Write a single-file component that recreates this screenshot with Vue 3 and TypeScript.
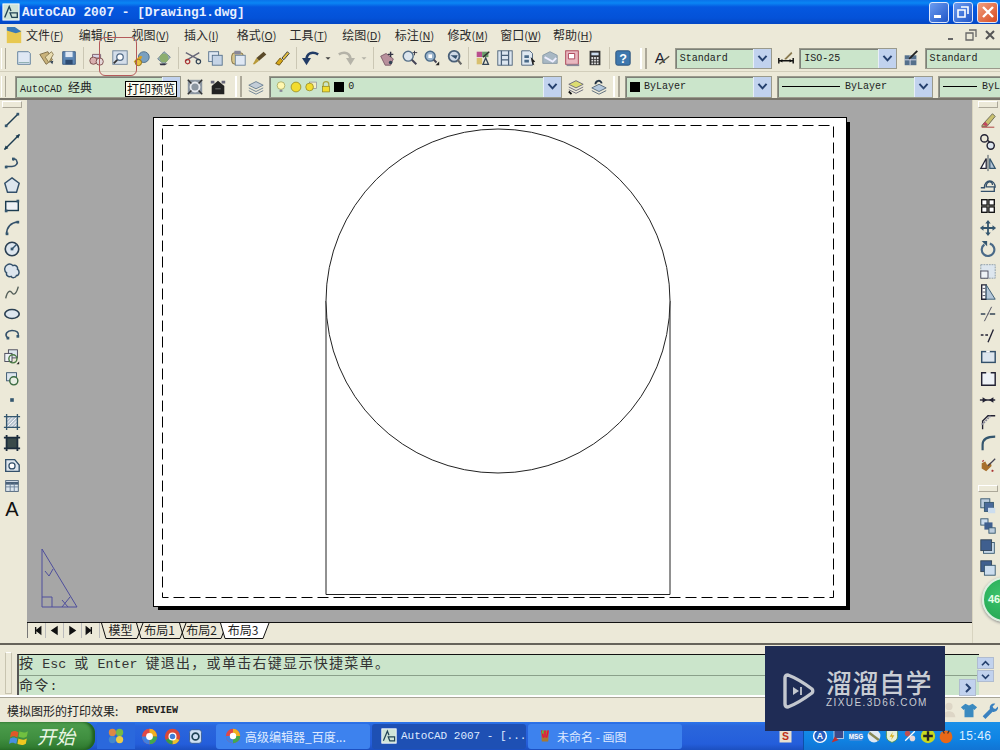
<script setup lang="ts">
const ico: Record<string, string> = {
  newf: '<path d="M3 3h12l2 2v12H3z" fill="#dfe8f4" stroke="#5a7a9a"/><path d="M4 15h12" stroke="#8aa"/>',
  open: '<path d="M2 6l9-3 5 9-7 5z" fill="#c9b27a" stroke="#7a6a44"/><path d="M8 9l7-6 2 3-5 9z" fill="#e8dcb0" stroke="#8a7a50"/><path d="M13 14l3 3 1-4z" fill="#345"/>',
  save: '<path d="M3 3h14v14H3z" fill="#5c86b4" stroke="#3a5a80"/><path d="M6 3h8v6H6z" fill="#dfe8f4"/><path d="M6 12h8v5H6z" fill="#2d4a70"/>',
  plot: '<path d="M5 6h9v4H5z" fill="#d8d4e4" stroke="#7a5a6a"/><circle cx="6" cy="13" r="4" fill="#d9b0b0" stroke="#7a4a4a"/><circle cx="13" cy="14" r="4" fill="#e4d8d8" stroke="#7a4a4a"/>',
  prev: '<rect x="2" y="2" width="16" height="15" fill="#d4deea" stroke="#6a8098"/><circle cx="10" cy="9" r="3.6" fill="#fff" stroke="#516a86" stroke-width="1.4"/><path d="M7 12l-4 4" stroke="#333" stroke-width="2"/>',
  publish: '<circle cx="12" cy="9" r="6" fill="#7aa0c0" stroke="#4a6a88"/><path d="M2 15c3-5 6-3 7-7" stroke="#d9a020" stroke-width="3" fill="none"/><circle cx="6" cy="15" r="3.5" fill="#e8c040" stroke="#8a6a10"/>',
  dwf: '<path d="M3 11l7-8 7 6-7 8z" fill="#9ab0c4" stroke="#6a8090"/><circle cx="10" cy="10" r="5" fill="#8cae6e"/><path d="M5 16h9l-3 2H6z" fill="#334"/>',
  cut: '<path d="M2 4l15 8M2 13L17 4" stroke="#667" stroke-width="1.5"/><circle cx="4" cy="14" r="2.4" fill="none" stroke="#a33" stroke-width="1.4"/><circle cx="16" cy="14" r="2.4" fill="none" stroke="#345" stroke-width="1.4"/>',
  copy: '<rect x="3" y="3" width="11" height="11" fill="#e0e8f2" stroke="#55708c"/><rect x="7" y="7" width="11" height="11" fill="#c5d4e6" stroke="#55708c"/>',
  paste: '<rect x="3" y="4" width="13" height="13" rx="4" fill="#d8c68c" stroke="#7a6a40"/><rect x="6" y="2" width="7" height="4" fill="#889"/><rect x="7" y="7" width="11" height="11" fill="#dfe8f4" stroke="#6b8299"/>',
  brush: '<path d="M14 3l3 3-8 7-3-3z" fill="#5a4a2a"/><path d="M6 10l3 3-5 4-2 0z" fill="#b89a3a"/>',
  match: '<path d="M3 16l5-6 3 3-4 5z" fill="#d8a818" stroke="#6a5010"/><path d="M10 10l6-7 2 2-6 7z" fill="#e4c040" stroke="#333"/>',
  undo: '<path d="M18 6C11 2 5 5 5 12" stroke="#223c66" stroke-width="3" fill="none"/><path d="M0 10h10l-5 8z" fill="#223c66"/>',
  redo: '<path d="M2 6c7-4 13-1 13 6" stroke="#b5b3a8" stroke-width="3" fill="none"/><path d="M10 10h10l-5 8z" fill="#b5b3a8"/>',
  dd: '<path d="M7 9h6l-3 3z" fill="#444"/>',
  dd2: '<path d="M7 9h6l-3 3z" fill="#b5b3a8"/>',
  pan: '<path d="M3 8l6-3 8 6-3 7H8z" fill="#b8909c" stroke="#7a5a68"/><path d="M14 3v6M11 6h6" stroke="#334" stroke-width="1.6"/><circle cx="14" cy="15" r="2" fill="#345"/>',
  zoomr: '<circle cx="8" cy="8" r="5.5" fill="#dde6ee" stroke="#556f88" stroke-width="1.6"/><path d="M12 12l5 5" stroke="#445" stroke-width="2.2"/><path d="M15 2v5M13 4h5" stroke="#334"/>',
  zoomw: '<circle cx="8" cy="8" r="5.5" fill="#9ab4cc" stroke="#4a6a88" stroke-width="1.6"/><rect x="6" y="6" width="4" height="4" fill="#fff"/><path d="M12 12l3 3" stroke="#445" stroke-width="2.2"/><path d="M14 18l4-4v4z" fill="#222"/>',
  zoomp: '<circle cx="9" cy="8" r="6" fill="#cfd9e6" stroke="#4a6078" stroke-width="2"/><path d="M5 7h8l-2 4z" fill="#34506e"/><path d="M13 12l4 5" stroke="#666" stroke-width="2.4"/>',
  props: '<rect x="3" y="3" width="6" height="6" fill="#b94f8e"/><rect x="9" y="3" width="7" height="6" fill="#6a9a6a"/><path d="M3 10h6v7H3z" fill="#d8c070"/><path d="M10 17l3-7 3 7z" fill="none" stroke="#345" stroke-width="1.5"/><path d="M10 9l7-6" stroke="#333" stroke-width="1.6"/>',
  design: '<rect x="2" y="2" width="16" height="16" fill="#dce6f0" stroke="#4a6078"/><path d="M6 2v16M14 2v16M6 7h8M6 12h8" stroke="#4a6078" stroke-width="1.4"/>',
  tool: '<path d="M3 2h9l3 3v13H3z" fill="#dfe8f0" stroke="#4a6078"/><path d="M6 7h5v3H6zM6 12h5v3H6z" fill="#4a6a88"/><path d="M13 9l5 5-2 1 1 3-2-1-1-3z" fill="#222"/>',
  sheet: '<path d="M2 7l8-4 8 4v9H2z" fill="#a8b8c4" stroke="#8899a6"/><path d="M4 9l9 5 4-4" stroke="#eef" stroke-width="2" fill="none"/>',
  markup: '<rect x="3" y="2" width="14" height="15" fill="#e8b8c0" stroke="#a83c50"/><path d="M6 5h7v6H6z" fill="#fff" stroke="#a83c50"/><path d="M4 18h14" stroke="#889" stroke-width="2"/>',
  calc: '<rect x="4" y="2" width="12" height="16" fill="#333"/><rect x="6" y="4" width="8" height="3" fill="#cde"/><path d="M6 9h2v2H6zM9 9h2v2H9zM12 9h2v2h-2zM6 12h2v2H6zM9 12h2v2H9zM12 12h2v2h-2zM6 15h2v2H6zM9 15h2v2H9zM12 15h2v2h-2z" fill="#ddd"/>',
  help: '<rect x="2" y="2" width="16" height="16" rx="2" fill="#3f78ae" stroke="#274e78"/><text x="10" y="15.5" font-family="Liberation Sans" font-weight="700" font-size="14" text-anchor="middle" fill="#fff">?</text>',
  styleA: '<text x="2" y="15" font-family="Liberation Sans" font-size="17" fill="#223">A</text><path d="M7 17L18 8" stroke="#554" stroke-width="1.6"/>',
  dim: '<path d="M2 13h16M2 10v6M18 10v6" stroke="#111" stroke-width="1.6"/><path d="M3 13l3-2v4zM17 13l-3-2v4z" fill="#111"/><path d="M8 11l8-8 1 2-7 7z" fill="#8a7a50"/>',
  tstyle: '<rect x="3" y="7" width="13" height="11" fill="#55708c"/><path d="M3 12h13M9 7v11" stroke="#dde"/><path d="M8 11l9-9" stroke="#222" stroke-width="2"/>',
  wsgear: '<rect x="2" y="2" width="16" height="16" fill="#8b95a0"/><circle cx="10" cy="10" r="5" fill="none" stroke="#e8eaee" stroke-width="2"/><path d="M2 2l4 4M18 2l-4 4M2 18l4-4M18 18l-4-4" stroke="#333" stroke-width="1.6"/>',
  wsdark: '<path d="M3 9l7-6 7 6v9H3z" fill="#222"/><path d="M2 3h4v3H2zM14 3h4v3h-4z" fill="#667"/><path d="M7 12h6" stroke="#777"/>',
  layers: '<path d="M10 4l8 4-8 4-8-4z" fill="#c3cdd8" stroke="#6a7f92"/><path d="M2 11l8 4 8-4M2 14l8 4 8-4" stroke="#6a7f92" fill="none"/>',
  layerY: '<path d="M10 3l8 4-8 4-8-4z" fill="#dcdc70" stroke="#667"/><path d="M2 10l8 4 8-4M2 13l8 4 8-4" stroke="#667" fill="none"/><path d="M2 15l3 3" stroke="#111" stroke-width="2"/>',
  layerB: '<path d="M10 7l8 4-8 4-8-4z" fill="#b4c8dc" stroke="#567"/><path d="M2 14l8 4 8-4" stroke="#567" fill="none"/><path d="M6 7c0-4 6-6 7-1" stroke="#234" stroke-width="2" fill="none"/>',
  bulb: '<circle cx="10" cy="8" r="5.5" fill="#fff7b0" stroke="#9a9a50"/><path d="M8 14h4v3H8z" fill="#889"/>',
  sun: '<circle cx="10" cy="10" r="7" fill="#f2dc30" stroke="#8a8020"/>',
  frz: '<rect x="8" y="3" width="10" height="9" fill="#f4f0c0" stroke="#889"/><circle cx="8" cy="10" r="5.5" fill="#f2dc30" stroke="#8a8020"/>',
  lock: '<path d="M6 9V6c0-5 8-5 8 0v3" fill="none" stroke="#a9a340" stroke-width="1.8"/><rect x="5" y="9" width="10" height="8" fill="#f2dc30" stroke="#8a8020"/>',
  line: '<path d="M3 17L17 3" stroke="#1c3c50" stroke-width="1.6"/><rect x="2" y="15" width="3" height="3" fill="#34566e"/><rect x="15" y="2" width="3" height="3" fill="#34566e"/>',
  xline: '<path d="M2 18L18 2" stroke="#1c3c50" stroke-width="1.6"/><path d="M1 19l2-5 3 3zM19 1l-2 5-3-3z" fill="#1c3c50"/>',
  pline: '<path d="M3 14h7c5 0 7-4 5-7-1-2-3-2-4 0" fill="none" stroke="#33506a" stroke-width="1.7"/><rect x="2" y="13" width="3" height="3" fill="#34566e"/><rect x="10" y="4" width="3" height="3" fill="#34566e"/>',
  poly: '<path d="M10 2l8 6-3 10H5L2 8z" fill="#dde6ee" stroke="#33506a" stroke-width="1.6"/>',
  rect: '<rect x="3" y="5" width="14" height="10" fill="#eef2f6" stroke="#1c3c50" stroke-width="1.6"/><rect x="15" y="3" width="3" height="3" fill="#34566e"/><rect x="2" y="14" width="3" height="3" fill="#34566e"/>',
  arc: '<path d="M4 17C4 9 9 4 17 3" fill="none" stroke="#33506a" stroke-width="1.8"/><rect x="3" y="15" width="3" height="3" fill="#34566e"/><rect x="15" y="2" width="3" height="3" fill="#34566e"/>',
  circle: '<circle cx="10" cy="10" r="7.5" fill="#dde6ee" stroke="#2a3f52" stroke-width="1.8"/><path d="M10 10l5-5" stroke="#34566e" stroke-width="1.6"/><rect x="8.5" y="8.5" width="3" height="3" fill="#34566e"/>',
  cloud: '<path d="M5 3c3-2 5 0 6 1 3-1 6 1 5 4 3 2 2 7-1 7-1 3-5 3-6 1-3 1-6-1-5-4-3-2-3-7 1-9z" fill="#dde6ee" stroke="#33506a" stroke-width="1.6"/>',
  spline: '<path d="M3 17C5 8 8 8 10 11s5 1 7-7" fill="none" stroke="#55605a" stroke-width="1.5"/>',
  ellipse: '<ellipse cx="10" cy="10" rx="8" ry="5" fill="#dde6ee" stroke="#2a3f52" stroke-width="1.8"/>',
  earc: '<path d="M5 13C1 9 5 5 10 5c5 0 8 2 7 6" fill="none" stroke="#33506a" stroke-width="1.7"/><rect x="4" y="12" width="3" height="3" fill="#34566e"/><rect x="15" y="10" width="3" height="3" fill="#34566e"/>',
  insert: '<rect x="6" y="2" width="10" height="9" fill="#dde6ee" stroke="#445"/><rect x="2" y="6" width="8" height="9" fill="#eef2f6" stroke="#445"/><circle cx="11" cy="12" r="4.5" fill="none" stroke="#4a7a44" stroke-width="1.6"/><path d="M15 18l3-3v3z" fill="#222"/>',
  block: '<rect x="4" y="3" width="11" height="9" fill="#dde6ee" stroke="#33506a"/><circle cx="12" cy="12" r="4.5" fill="#e8eee4" stroke="#3a6a40" stroke-width="1.6"/>',
  point: '<rect x="8" y="8" width="4" height="4" fill="#34566e"/>',
  hatch: '<rect x="4" y="4" width="12" height="12" fill="#b8c4d0"/><path d="M4 8l4-4M4 12l8-8M4 16l12-12M8 16l8-8M12 16l4-4" stroke="#fff"/><path d="M1 4h18M1 16h18M4 1v18M16 1v18" stroke="#34566e" stroke-width="1.5"/>',
  grad: '<rect x="4" y="4" width="12" height="12" fill="#3a4a4a"/><path d="M1 4h18M1 16h18M4 1v18M16 1v18" stroke="#1c2c3c" stroke-width="2"/>',
  region: '<path d="M3 4h10l5 6v7H3z" fill="#dde6ee" stroke="#33506a" stroke-width="1.5"/><circle cx="10" cy="11" r="3.4" fill="#fff" stroke="#33506a" stroke-width="1.4"/>',
  table: '<rect x="3" y="4" width="14" height="12" fill="#dde6ee" stroke="#4a6078"/><path d="M3 7h14" stroke="#4a6078" stroke-width="3"/><path d="M3 11h14M8 7v9M12.5 7v9" stroke="#6a8098"/>',
  erase: '<path d="M4 15L15 3l3 3-9 11H3z" fill="#c9c070" stroke="#665"/><path d="M3 18h14" stroke="#a33"/><path d="M4 15l4 2 2-2-3-3z" fill="#c04860"/>',
  ccopy: '<circle cx="6" cy="6" r="4" fill="none" stroke="#223" stroke-width="1.6"/><circle cx="13" cy="14" r="4" fill="#dde6ee" stroke="#223" stroke-width="1.6"/><path d="M9 8l3 2" stroke="#223" stroke-width="1.6"/>',
  mirror: '<path d="M10 1v18" stroke="#345"/><path d="M8 5v11H2z" fill="#fff" stroke="#223" stroke-width="1.4"/><path d="M12 5v11h6z" fill="#b4c6d8" stroke="#34566e" stroke-width="1.4"/>',
  offset: '<path d="M2 17h15v-5H8c0-7 7-7 7-2" fill="none" stroke="#33506a" stroke-width="1.5"/><path d="M2 13h4c0-10 12-10 12 0" fill="none" stroke="#33506a" stroke-width="1.5"/>',
  array: '<rect x="3" y="3" width="6" height="6" fill="#fff" stroke="#111" stroke-width="1.5"/><rect x="11" y="3" width="6" height="6" fill="#fff" stroke="#111" stroke-width="1.5"/><rect x="3" y="11" width="6" height="6" fill="#fff" stroke="#111" stroke-width="1.5"/><rect x="11" y="11" width="6" height="6" fill="#fff" stroke="#111" stroke-width="1.5"/>',
  move: '<path d="M10 1l3 4h-2v4h4V7l4 3-4 3v-2h-4v4h2l-3 4-3-4h2v-4H5v2l-4-3 4-3v2h4V5H7z" fill="#34566e"/>',
  rotate: '<path d="M6 5a7 7 0 1 0 6-1" fill="none" stroke="#4a6a88" stroke-width="2.4"/><path d="M3 1h6v6z" fill="#34566e"/>',
  scale: '<rect x="2" y="3" width="16" height="15" fill="#dde6ee" stroke="#8899a6" stroke-dasharray="2 1"/><rect x="2" y="10" width="8" height="8" fill="#eef2f6" stroke="#445"/>',
  stretch: '<path d="M3 2h5v16H3z" fill="#fff" stroke="#223" stroke-width="1.5"/><path d="M8 2l10 16H8z" fill="#b4c6d8" stroke="#34566e"/><path d="M4 6h3M4 10h3M4 14h3" stroke="#445"/>',
  trim: '<path d="M2 10h5M12 10h6" stroke="#345" stroke-width="1.4"/><path d="M9 10h2" stroke="#999"/><path d="M6 18L14 2" stroke="#445"/>',
  extend: '<path d="M2 10h3M7 10h3" stroke="#223" stroke-width="1.5"/><path d="M10 18l6-14" stroke="#223" stroke-width="1.5"/>',
  brk: '<rect x="3" y="4" width="15" height="12" fill="#dde6ee" stroke="#33506a" stroke-width="1.6"/><path d="M8 4h4" stroke="#fff" stroke-width="2"/>',
  brk2: '<path d="M8 3H3v14h15V3h-5" fill="#eef2f6" stroke="#223" stroke-width="1.6"/>',
  join: '<path d="M1 10h17" stroke="#223" stroke-width="1.6"/><path d="M9 10l-5-3v6zM11 10l5-3v6z" fill="#223"/>',
  chamfer: '<path d="M4 18V9l6-6h8" fill="none" stroke="#223" stroke-width="1.5"/><path d="M3 13L13 3" stroke="#889" stroke-dasharray="2 1" stroke-width="2"/>',
  fillet: '<path d="M4 18V12C4 6 8 3 18 3" fill="none" stroke="#34566e" stroke-width="2.4"/>',
  explode: '<path d="M3 8l4-2 2 4 4-3 1 4-6 6-5-3z" fill="#a8702c"/><path d="M10 11l8-8" stroke="#445" stroke-width="1.4"/><path d="M4 5l1 1M14 16l2 1" stroke="#a33" stroke-width="2"/>',
  ord1: '<rect x="2" y="2" width="10" height="10" fill="#bcd" stroke="#34566e"/><rect x="6" y="6" width="10" height="10" fill="#4a6a9a" stroke="#34566e"/><rect x="10" y="12" width="8" height="6" fill="#cde"/>',
  ord2: '<rect x="2" y="2" width="8" height="7" fill="#cde" stroke="#34566e"/><rect x="6" y="6" width="9" height="8" fill="#3f5f8f"/><rect x="11" y="12" width="7" height="6" fill="#bcd" stroke="#34566e"/>',
  ord3: '<rect x="5" y="5" width="12" height="12" fill="#cde" stroke="#34566e"/><rect x="2" y="2" width="12" height="12" fill="#3f5f8f" stroke="#345"/>',
  ord4: '<rect x="2" y="2" width="12" height="12" fill="#3f5f8f" stroke="#345"/><rect x="6" y="7" width="12" height="11" fill="#cde" stroke="#34566e"/>',
  acad: '<rect x="1" y="1" width="18" height="18" fill="#cfe4d8" stroke="#fff"/><path d="M3 16L8 4l2 5M9 11h8v5h-6z" stroke="#245" fill="none" stroke-width="1.5"/>',
  acadM: '<rect x="2" y="5" width="16" height="14" fill="#e8c850"/><path d="M2 1l9 0 7 5-6 2-10-3z" fill="#3a7ab8"/>',
  winflag: '<path d="M2 6c3-2 5-1 7 0l-1 5c-2-1-4-2-7 0z" fill="#e05828"/><path d="M10 5c2 1 5 2 8 0l-1 5c-3 2-6 1-8 0z" fill="#70c040"/><path d="M1 12c3-2 5-1 7 0l-1 5c-2-1-4-2-7 0z" fill="#4890e0"/><path d="M9 12c2 1 5 2 8 0l-1 5c-3 2-6 1-8 0z" fill="#f0c820"/>',
  ql1: '<circle cx="6" cy="6" r="4" fill="#d84"/><circle cx="14" cy="6" r="4" fill="#7b4"/><circle cx="6" cy="14" r="4" fill="#48c"/><circle cx="14" cy="14" r="4" fill="#ec4"/>',
  ql2: '<circle cx="10" cy="10" r="9" fill="#e04848"/><path d="M10 1a9 9 0 0 1 9 9H10z" fill="#f0b020"/><path d="M10 10h9a9 9 0 0 1-9 9z" fill="#40a850"/><path d="M10 10v9a9 9 0 0 1-9-9z" fill="#4080e0"/><circle cx="10" cy="10" r="4" fill="#fff"/>',
  chrome: '<circle cx="10" cy="10" r="9" fill="#d84838"/><path d="M10 10l8 4a9 9 0 0 1-8 5z" fill="#e8c030"/><path d="M10 10l-8 4a9 9 0 0 0 8 5z" fill="#3a9a48"/><circle cx="10" cy="10" r="4" fill="#3f7fd8" stroke="#fff" stroke-width="1.5"/>',
  ql3: '<rect x="3" y="2" width="14" height="16" rx="3" fill="#cfe0f4" stroke="#345a90"/><circle cx="10" cy="10" r="4" fill="none" stroke="#245" stroke-width="2"/>',
  paint: '<path d="M5 3h10l-1 14H6z" fill="#a87830"/><path d="M6 3l2 9M10 3v9M14 3l-2 9" stroke="#e04" stroke-width="1.6"/><path d="M7 3v4" stroke="#4c4" stroke-width="1.6"/>',
  s: '<rect x="2" y="2" width="16" height="16" fill="#e8e0d0"/><text x="10" y="15" font-family="Liberation Sans" font-weight="700" font-size="14" text-anchor="middle" fill="#c03018">S</text>',
  t1: '<circle cx="10" cy="10" r="8" fill="#245ec0" stroke="#fff" stroke-width="1.8"/><text x="10" y="14" font-family="Liberation Sans" font-weight="700" font-size="11" text-anchor="middle" fill="#fff">A</text>',
  t2: '<rect x="5" y="2" width="12" height="11" fill="#3a4a8a" stroke="#cde"/><path d="M2 18l4-7 5 4z" fill="#c03030"/>',
  t3: '<path d="M2 6h16v10H2z" fill="#4a8ad8"/><text x="10" y="14" font-family="Liberation Sans" font-weight="700" font-size="8" text-anchor="middle" fill="#fff">MSG</text>',
  t4: '<circle cx="10" cy="10" r="8" fill="#dfe8f4"/><path d="M4 6l12 9" stroke="#885" stroke-width="3"/>',
  t5: '<path d="M3 3h14v8c0 4-4 6-7 7-3-1-7-3-7-7z" fill="#e8f0d8" stroke="#4a8a3c"/><path d="M11 5l-4 6h3l-1 4 4-6h-3z" fill="#d8b020"/>',
  t6: '<circle cx="7" cy="7" r="3.5" fill="#c05050"/><circle cx="13" cy="13" r="3.5" fill="#e8d8d8"/><path d="M4 16L16 4" stroke="#fff" stroke-width="1.6"/>',
  t7: '<circle cx="10" cy="10" r="9" fill="#c8d820"/><path d="M10 4v12M4 10h12" stroke="#222" stroke-width="3"/>',
  t8: '<circle cx="10" cy="11" r="8" fill="#e86818"/><path d="M6 3l2 4M14 3l-2 4" stroke="#333" stroke-width="1.5"/>',
  person: '<circle cx="10" cy="6" r="4" fill="#ddd6c6"/><path d="M3 18c0-9 14-9 14 0z" fill="#ddd6c6"/>',
  shirt: '<path d="M6 3l4 2 4-2 5 4-3 3-1-1v9H5V9l-1 1-3-3z" fill="#3a8ac0"/>',
  wrench: '<path d="M3 17l8-8c-1-4 2-7 6-6l-3 3 1 2 2 1 3-3c1 4-3 7-6 6l-8 8z" fill="#3a82c0"/>',
}

type Item = { k: 'i' | 'sep' | 'grip' | 'combo' | 'dd'; n?: string; w?: number; t?: string; cj?: string; pre?: string[]; sw?: boolean; line?: number; noarrow?: boolean; gap?: number }
const I = (n: string): Item => ({ k: 'i', n })
const S: Item = { k: 'sep' }
const G: Item = { k: 'grip', gap: 6 }

const row1: Item[] = [
  I('newf'), I('open'), I('save'), S,
  I('plot'), I('prev'), I('publish'), I('dwf'), S,
  I('cut'), I('copy'), I('paste'), I('brush'), I('match'), S,
  I('undo'), { k: 'dd', n: 'dd' }, I('redo'), { k: 'dd', n: 'dd2' }, S,
  I('pan'), I('zoomr'), I('zoomw'), I('zoomp'), S,
  I('props'), I('design'), I('tool'), I('sheet'), I('markup'), I('calc'), S,
  I('help'), G,
  I('styleA'), { k: 'combo', w: 97, t: 'Standard' }, I('dim'),
  { k: 'combo', w: 98, t: 'ISO-25' }, I('tstyle'),
  { k: 'combo', w: 98, t: 'Standard', noarrow: true },
]
const row2: Item[] = [
  { k: 'combo', w: 166, t: 'AutoCAD ', cj: '经典' }, I('wsgear'), I('wsdark'), G,
  I('layers'), { k: 'combo', w: 293, t: '0', pre: ['bulb', 'sun', 'frz', 'lock'], sw: true }, I('layerY'), I('layerB'), { k: 'grip', gap: 3 },
  { k: 'combo', w: 147, t: 'ByLayer', sw: true }, { k: 'combo', w: 156, t: 'ByLayer', line: 58 },
  { k: 'combo', w: 70, t: 'ByLayer', line: 34, noarrow: true },
]
const left = ['line', 'xline', 'pline', 'poly', 'rect', 'arc', 'circle', 'cloud', 'spline', 'ellipse', 'earc', 'insert', 'block', 'point', 'hatch', 'grad', 'region', 'table']
const right1 = ['erase', 'ccopy', 'mirror', 'offset', 'array', 'move', 'rotate', 'scale', 'stretch', 'trim', 'extend', 'brk', 'brk2', 'join', 'chamfer', 'fillet', 'explode']
const right2 = ['ord1', 'ord2', 'ord3', 'ord4']
const menus = [['文件', 'F'], ['编辑', 'E'], ['视图', 'V'], ['插入', 'I'], ['格式', 'O'], ['工具', 'T'], ['绘图', 'D'], ['标注', 'N'], ['修改', 'M'], ['窗口', 'W'], ['帮助', 'H']]
const tabs = [
  { t: '模型', w: 35 }, { t: '布局1', w: 43 }, { t: '布局2', w: 41 }, { t: '布局3', w: 42, on: true },
]
const nav = ['M9 3v8M15 3l-5 4 5 4z', 'M13 3l-6 4 6 4z', 'M7 3l6 4-6 4z', 'M11 3v8M5 3l5 4-5 4z']
const tray = ['t1', 't2', 't3', 't4', 't5', 't6', 't7', 't8']
</script>

<template>
  <div class="app">
    <header class="title">
      <svg class="ic18" viewBox="0 0 20 20" v-html="ico.acad"></svg>
      <span class="title-text">AutoCAD 2007 - [Drawing1.dwg]</span>
      <div class="wbtns">
        <span class="wb"><i class="min"></i></span>
        <span class="wb"><svg viewBox="0 0 14 14" width="14" height="14"><path d="M5 2h7v7M2 5h7v7H2z" fill="none" stroke="#fff" stroke-width="1.6"/></svg></span>
        <span class="wb close"><svg viewBox="0 0 14 14" width="14" height="14"><path d="M2 2l10 10M12 2L2 12" stroke="#fff" stroke-width="2.4"/></svg></span>
      </div>
    </header>

    <nav class="menu">
      <svg class="menu-ic" viewBox="0 0 20 20" v-html="ico.acadM"></svg>
      <span v-for="m in menus" :key="m[0]" class="mi">{{ m[0] }}<span class="mn">(<u>{{ m[1] }}</u>)</span></span>
      <div class="mdi">
        <svg viewBox="0 0 14 14" width="14" height="14"><path d="M3 11h5" stroke="#666" stroke-width="2"/></svg>
        <svg viewBox="0 0 14 14" width="14" height="14"><path d="M5 2h7v7M2 5h7v7H2z" fill="none" stroke="#666" stroke-width="1.3"/></svg>
        <svg viewBox="0 0 14 14" width="14" height="14"><path d="M3 3l8 8M11 3l-8 8" stroke="#555" stroke-width="2"/></svg>
      </div>
    </nav>

    <div class="bar bar1">
      <span class="grip first"></span>
      <template v-for="(it, i) in row1" :key="i">
        <svg v-if="it.k === 'i'" class="tool" viewBox="0 0 20 20" v-html="ico[it.n!]"></svg>
        <svg v-else-if="it.k === 'dd'" class="ddt" viewBox="4 0 12 20" v-html="ico[it.n!]"></svg>
        <span v-else-if="it.k === 'sep'" class="sep"></span>
        <span v-else-if="it.k === 'grip'" class="grip" :style="{ marginLeft: it.gap + 'px' }"></span>
        <div v-else class="combo" :style="{ width: it.w + 'px' }">
          <span class="ctext">{{ it.t }}</span>
          <span v-if="!it.noarrow" class="arrow"><svg viewBox="0 0 12 10" width="11" height="9"><path d="M1.5 2l4.5 5 4.500-5" fill="none" stroke="#25406e" stroke-width="2.2"/></svg></span>
        </div>
      </template>
    </div>

    <div class="bar bar2">
      <span class="grip first"></span>
      <template v-for="(it, i) in row2" :key="i">
        <svg v-if="it.k === 'i'" class="tool" viewBox="0 0 20 20" v-html="ico[it.n!]"></svg>
        <span v-else-if="it.k === 'grip'" class="grip" :style="{ marginLeft: it.gap + 'px' }"></span>
        <div v-else class="combo tall" :style="{ width: it.w + 'px' }">
          <svg v-for="p in it.pre" :key="p" class="pre" viewBox="0 0 20 20" v-html="ico[p]"></svg>
          <i v-if="it.sw" class="swatch"></i>
          <i v-if="it.line" class="lt" :style="{ width: it.line + 'px' }"></i>
          <span class="ctext">{{ it.t }}<span v-if="it.cj" class="ccj">{{ it.cj }}</span></span>
          <span v-if="!it.noarrow" class="arrow"><svg viewBox="0 0 12 10" width="11" height="9"><path d="M1.5 2l4.5 5 4.500-5" fill="none" stroke="#25406e" stroke-width="2.2"/></svg></span>
        </div>
      </template>
    </div>

    <main class="main">
      <aside class="side left">
        <div class="vgrip"></div>
        <div class="vtools">
          <svg v-for="n in left" :key="n" class="vtool" viewBox="0 0 20 20" v-html="ico[n]"></svg>
          <span class="big-a">A</span>
        </div>
      </aside>

      <section class="center">
        <svg class="canvas" viewBox="27 100 945 522" preserveAspectRatio="none">
          <rect x="27" y="100" width="945" height="522" fill="#a6a6a6"/>
          <rect x="158" y="122" width="692" height="488" fill="#000"/>
          <rect x="153.500" y="117.500" width="693" height="489" fill="#fff" stroke="#000"/>
          <rect x="162.500" y="125.500" width="671" height="472" fill="none" stroke="#000" stroke-dasharray="11 5"/>
          <path d="M326 301V594.500H670V301" fill="none" stroke="#222"/>
          <circle cx="498" cy="301" r="172" fill="#fff" stroke="#222"/>
          <g fill="none" stroke="#4e4e9c">
            <path d="M42 549V607H77z"/>
            <path d="M42 597h10v10"/>
            <path d="M45 571l4 5 4-7M62 600l6 7M70 597l-8 10"/>
          </g>
        </svg>
        <div class="tabs">
          <div class="nav">
            <span v-for="(d, i) in nav" :key="i" class="navb"><svg viewBox="0 0 20 14" width="17" height="13"><path :d="d" stroke="#111" stroke-width="1.6" fill="#111"/></svg></span>
          </div>
          <span v-for="t in tabs" :key="t.t" class="tab" :class="{ on: t.on }" :style="{ width: t.w + 'px' }">
            <svg class="tab-shape" :viewBox="`0 0 ${t.w + 8} 17`" :width="t.w + 8" height="17"><path :d="`M0.500 0L5 15.500H${t.w + 1}L${t.w + 7} 0`" :fill="t.on ? '#fff' : 'none'" stroke="#111"/></svg>
            <span class="tab-t">{{ t.t }}</span>
          </span>
        </div>
      </section>

      <aside class="side right">
        <div class="vgrip"></div>
        <div class="vtools">
          <svg v-for="n in right1" :key="n" class="vtool" viewBox="0 0 20 20" v-html="ico[n]"></svg>
        </div>
        <div class="vgrip second"></div>
        <div class="vtools tight">
          <svg v-for="n in right2" :key="n" class="vtool" viewBox="0 0 20 20" v-html="ico[n]"></svg>
        </div>
      </aside>
    </main>

    <section class="cmd">
      <div class="cmd-grip"></div>
      <div class="cmd-box">
        <div class="cmd-line first"><span class="cj">按</span> Esc <span class="cj">或</span> Enter <span class="cj">键退出，或单击右键显示快捷菜单。</span></div>
        <div class="cmd-line"><span class="cj">命令</span>:</div>
      </div>
      <div class="scroll">
        <span class="sb"><svg viewBox="0 0 12 8" width="11" height="7"><path d="M2 6l4-4 4 4" fill="none" stroke="#25406e" stroke-width="2"/></svg></span>
        <span class="sb"><svg viewBox="0 0 12 8" width="11" height="7"><path d="M2 2l4 4 4-4" fill="none" stroke="#25406e" stroke-width="2"/></svg></span>
      </div>
      <span class="sb side-sb"><svg viewBox="0 0 8 12" width="8" height="12"><path d="M2 2l4 4-4 4" fill="none" stroke="#25406e" stroke-width="2"/></svg></span>
    </section>

    <footer class="status">
      <span class="st-a">模拟图形的打印效果:</span>
      <span class="st-b">PREVIEW</span>
      <div class="st-ic">
        <svg viewBox="0 0 20 20" width="18" height="18" v-html="ico.person"></svg>
        <svg viewBox="0 0 20 20" width="18" height="18" v-html="ico.shirt"></svg>
        <svg viewBox="0 0 20 20" width="18" height="18" v-html="ico.wrench"></svg>
      </div>
    </footer>

    <div class="taskbar">
      <div class="start">
        <svg viewBox="0 0 20 20" width="21" height="21" v-html="ico.winflag"></svg>
        <span>开始</span>
      </div>
      <div class="ql first"><svg viewBox="0 0 20 20" width="18" height="18" v-html="ico.ql1"></svg></div>
      <div class="ql group">
        <svg viewBox="0 0 20 20" width="17" height="17" v-html="ico.ql2"></svg>
        <svg viewBox="0 0 20 20" width="17" height="17" v-html="ico.chrome"></svg>
        <svg viewBox="0 0 20 20" width="17" height="17" v-html="ico.ql3"></svg>
      </div>
      <div class="task"><svg viewBox="0 0 20 20" width="16" height="16" v-html="ico.ql2"></svg><span>高级编辑器_百度...</span></div>
      <div class="task on"><svg viewBox="0 0 20 20" width="16" height="16" v-html="ico.acad"></svg><span class="mono">AutoCAD 2007 - [...</span></div>
      <div class="task"><svg viewBox="0 0 20 20" width="16" height="16" v-html="ico.paint"></svg><span>未命名 - 画图</span></div>
      <svg class="ts" viewBox="0 0 20 20" width="15" height="15" v-html="ico.s"></svg>
      <div class="tray">
        <svg v-for="n in tray" :key="n" viewBox="0 0 20 20" width="16" height="16" v-html="ico[n]"></svg>
        <span class="clock">15:46</span>
      </div>
    </div>

    <div class="red-mark"></div>
    <div class="tooltip">打印预览</div>
    <div class="ball"><span>46</span></div>
    <div class="wm">
      <svg class="wm-logo" viewBox="0 0 36 36" width="36" height="36">
        <path d="M5 5c0-2 1-3 3-3 8 3 16 8 24 14 1 1 1 3 0 4-8 6-16 11-24 14-2 0-3-1-3-3z" fill="none" stroke="#c4c8cf" stroke-width="3.4" stroke-linejoin="round"/>
        <path d="M13 14v8l6-4z" fill="#c4c8cf"/><path d="M21 14v8" stroke="#c4c8cf" stroke-width="1.8"/>
      </svg>
      <div class="wm-text">
        <div class="wm-cn">溜溜自学</div>
        <div class="wm-en">ZIXUE.3D66.COM</div>
      </div>
    </div>
  </div>
</template>

<style scoped>
.app {
  position: relative;
  width: 1000px;
  height: 750px;
  overflow: hidden;
  display: flex;
  flex-direction: column;
  background: #ece9d8;
  font-family: "Noto Sans CJK SC", "Liberation Sans", sans-serif;
  font-size: 12px;
  color: #222;
}
svg { display: block; flex: none; }

.title {
  height: 24px;
  flex: none;
  display: flex;
  align-items: center;
  padding-left: 2px;
  background: linear-gradient(#0a72ea 0, #0a86f4 3px, #0558e0 7px, #0452d8 18px, #0447c4 24px);
}
.ic18 { width: 18px; height: 18px; }
.title-text {
  margin-left: 2px;
  color: #e8f0ff;
  font: 700 12.800px "Liberation Mono", monospace;
}
.wbtns { margin-left: auto; margin-right: 2px; display: flex; gap: 4px; }
.wb {
  width: 18px;
  height: 19px;
  border: 1px solid #dfe8fb;
  border-radius: 3px;
  background: linear-gradient(135deg, #6c9cf0, #2056c8);
  display: flex;
  align-items: center;
  justify-content: center;
}
.wb.close { width: 19px; background: linear-gradient(135deg, #f0a080, #d84a20); }
.min { width: 7px; height: 3px; background: #fff; margin-top: 9px; margin-right: 4px; }

.menu {
  height: 21px;
  flex: none;
  display: flex;
  align-items: center;
  background: #ece9d8;
}
.menu-ic { width: 18px; height: 18px; margin: 0 3px 0 5px; }
.mi { width: 52.700px; flex: none; line-height: 20px; white-space: nowrap; color: #2a2a2a; }
.mn { font-size: 11px; }
.mdi { margin-left: auto; margin-right: 3px; display: flex; gap: 5px; }

.bar {
  flex: none;
  box-sizing: border-box;
  display: flex;
  align-items: center;
  overflow: hidden;
  border-bottom: 1px solid #d2cebb;
}
.bar1 { height: 27px; }
.bar2 { height: 28px; padding-top: 3px; border-bottom: 2px solid #77746a; }
.grip { box-sizing: border-box; width: 7px; height: 21px; margin-right: 3px; flex: none; border-left: 2px solid #fff; border-right: 2px solid #aca899; }
.grip.first { width: 5px; margin: 0 7px 0 1px; border-left-width: 1px; border-right-width: 1px; }
.tool { width: 18px; height: 18px; margin: 0 2.200px; }
.ddt { width: 10px; height: 18px; margin: 0 1.500px; }
.sep { width: 1px; height: 22px; margin: 0 2.500px; background: #cbc7b4; flex: none; }

.combo {
  flex: none;
  box-sizing: border-box;
  height: 21px;
  margin: 0 3px 0 2px;
  display: flex;
  align-items: center;
  background: #cbe5cb;
  border: 1px solid #9a9a8c;
  box-shadow: inset 1px 1px 0 #7c8078;
  padding-left: 4px;
  position: relative;
  overflow: hidden;
  font: 10px "Liberation Mono", monospace;
  color: #222;
}
.combo.tall { height: 22px; }
.ctext { white-space: nowrap; }
.ccj { font: 12px "Noto Sans CJK SC", sans-serif; }
.arrow {
  margin-left: auto;
  width: 17px;
  height: 100%;
  flex: none;
  background: #c1d2ee;
  border-left: 1px solid #e8eef8;
  display: flex;
  align-items: center;
  justify-content: center;
}
.pre { width: 14px; height: 14px; margin-right: 1px; }
.swatch { width: 10px; height: 10px; background: #000; margin-right: 4px; flex: none; }
.lt { height: 1px; background: #000; margin-right: 5px; flex: none; }

.main { flex: 1; min-height: 0; display: flex; }
.side { flex: none; display: flex; flex-direction: column; align-items: center; }
.side.left { width: 27px; padding-right: 3px; box-sizing: border-box; }
.side.right { width: 28px; padding-left: 2px; box-sizing: border-box; border-left: 1px solid #d8d4c0; }
.vgrip { box-sizing: border-box; width: 20px; height: 7px; margin: 1px 0 3px; flex: none; border-top: 1px solid #fff; border-bottom: 1px solid #aca899; border-left: 1px solid #fff; border-right: 1px solid #aca899; }
.vgrip.second { margin: 11px 0 5px; }
.vtools { display: flex; flex-direction: column; align-items: center; gap: 3.550px; }
.vtools.tight { gap: 2.700px; }
.vtool { width: 18px; height: 18px; }
.big-a { font: 400 20px/21px "Liberation Sans", sans-serif; color: #111; }

.center { flex: 1; min-width: 0; display: flex; flex-direction: column; }
.canvas { width: 945px; height: 522px; }
.tabs {
  flex: 1;
  display: flex;
  align-items: flex-start;
  border-top: 1px solid #111;
}
.nav { display: flex; width: 70px; height: 15px; flex: none; margin-right: 3px; border-left: 1px solid #777; }
.navb { width: 17.500px; display: flex; align-items: center; justify-content: center; border-right: 1px solid #bbb; }
.tab { position: relative; height: 16px; flex: none; display: flex; justify-content: center; }
.tab-shape { position: absolute; left: 0; top: 0; }
.tab-t { position: relative; font-size: 12px; line-height: 14px; color: #222; padding-left: 4px; }

.cmd {
  height: 54px;
  flex: none;
  position: relative;
  box-sizing: border-box;
  border-top: 2px solid #66635a;
  border-bottom: 2px solid #fff;
  padding-top: 9px;
  display: flex;
}
.cmd-grip { box-sizing: border-box; width: 7px; height: 42px; margin: -2px 5px 0 5px; border: 1px solid #c8c4b0; border-top-color: #fff; flex: none; }
.cmd-box { width: 960px; flex: none; border-top: 1px solid #111; border-left: 2px solid #555; background: #cbe5cb; }
.cmd-line { height: 21px; box-sizing: border-box; font: 13.300px/21px "Liberation Mono", monospace; color: #333; white-space: nowrap; }
.cmd-line.first { border-bottom: 1px solid #8aa08a; line-height: 15px; }
.cj { font: 14px/15px "Noto Sans CJK SC", sans-serif; letter-spacing: 1.300px; }
.scroll { position: absolute; left: 977px; top: 12px; display: flex; flex-direction: column; gap: 1px; }
.sb { width: 15px; height: 10px; background: #c1d2ee; border: 1px solid #b0bcd0; display: flex; align-items: center; justify-content: center; }
.side-sb { position: absolute; left: 959px; top: 34px; height: 15px; }

.status {
  height: 25px;
  flex: none;
  display: flex;
  align-items: center;
  box-sizing: border-box;
  border-top: 1px solid #a8a596;
  padding-left: 7px;
}
.st-a { font-size: 12px; width: 129px; color: #222; white-space: nowrap; }
.st-b { font: 700 10px "Liberation Mono", monospace; color: #222; }
.st-ic { margin-left: auto; margin-right: 2px; display: flex; gap: 2px; }

.taskbar {
  height: 28px;
  flex: none;
  display: flex;
  align-items: center;
  background: linear-gradient(#2c74ea 0, #2a66dc 4px, #245edb 22px, #1b4fc0 28px);
  position: relative;
  color: #fff;
}
.start {
  width: 95px;
  height: 28px;
  flex: none;
  box-sizing: border-box;
  padding-left: 9px;
  display: flex;
  align-items: center;
  gap: 7px;
  background: linear-gradient(#4d9e4d, #3f8e3f 60%, #2c762c);
  border-radius: 0 11px 11px 0;
  box-shadow: inset -3px 0 3px #1f5f1f;
}
.start span { font: italic 19px "Noto Sans CJK SC", sans-serif; color: #e9f6e4; line-height: 26px; }
.ql { flex: none; display: flex; align-items: center; height: 26px; }
.ql.first { width: 38px; margin-left: 2px; justify-content: center; background: #2a68dc; }
.ql.group { gap: 6px; width: 81px; padding-left: 6px; box-sizing: border-box; }
.task {
  width: 154px;
  height: 25px;
  margin-right: 2px;
  flex: none;
  box-sizing: border-box;
  padding-left: 9px;
  display: flex;
  align-items: center;
  gap: 4px;
  border-radius: 3px;
  background: #3d82ee;
  color: #dfeaff;
  font-size: 12px;
  white-space: nowrap;
}
.task.on { background: #1e50b4; }
.task .mono { font: 11px "Liberation Mono", monospace; }
.ts { margin-left: auto; margin-right: 10px; }
.tray {
  width: 197px;
  height: 28px;
  flex: none;
  box-sizing: border-box;
  padding-left: 8px;
  display: flex;
  align-items: center;
  gap: 2px;
  background: linear-gradient(#1a90e8, #0f84e4 60%, #1174d4);
  border-left: 1px solid #0d4fa8;
}
.clock { margin-left: 3px; font: 12px "Liberation Sans", sans-serif; letter-spacing: 0.500px; color: #dff0ff; }

.red-mark {
  position: absolute;
  left: 99px;
  top: 37px;
  width: 38px;
  height: 39px;
  box-sizing: border-box;
  border: 1px solid #b45a5a;
  border-radius: 6px;
}
.tooltip {
  position: absolute;
  left: 125px;
  top: 81px;
  width: 52px;
  height: 16px;
  box-sizing: border-box;
  background: #fbfbf0;
  border: 1px solid #000;
  font-size: 12px;
  line-height: 14px;
  text-align: center;
  color: #111;
}
.ball {
  position: absolute;
  left: 982px;
  top: 577px;
  width: 45px;
  height: 45px;
  box-sizing: border-box;
  border-radius: 50%;
  border: 2px solid #dcefe0;
  background: radial-gradient(circle at 40% 40%, #3cc46c, #1e9e4c);
  box-shadow: 0 1px 3px #888;
}
.ball span { position: absolute; left: 4px; top: 14px; font: 700 11px "Liberation Sans", sans-serif; color: #e6ffe8; }
.wm {
  position: absolute;
  left: 765px;
  top: 646px;
  width: 180px;
  height: 85px;
  background: #1f2c55;
  display: flex;
  align-items: center;
  box-sizing: border-box;
  padding-left: 15px;
  gap: 10px;
  color: #c9cdd4;
}
.wm-logo { margin-top: 4px; }
.wm-text { margin-top: -2px; }
.wm-cn { font-size: 26px; line-height: 30px; font-weight: 500; letter-spacing: 0.500px; white-space: nowrap; }
.wm-en { font: 10px/11px "Liberation Sans", sans-serif; letter-spacing: 1.400px; white-space: nowrap; }
</style>
